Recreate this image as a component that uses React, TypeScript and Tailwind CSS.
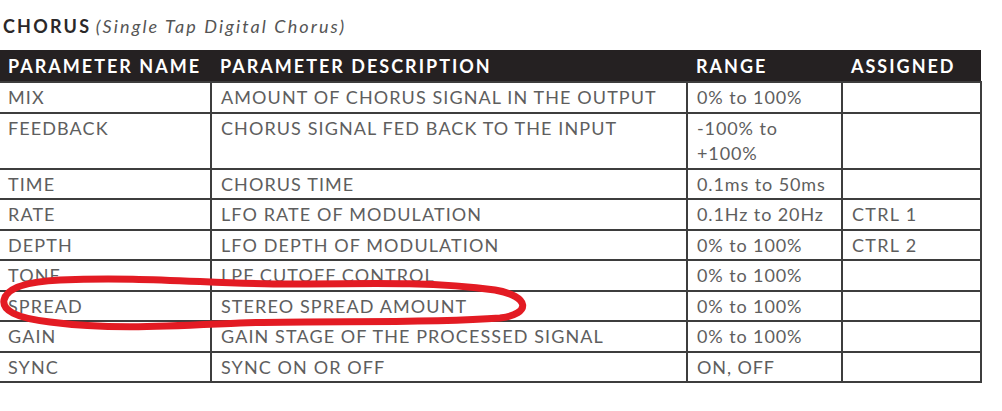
import React from 'react';

type Row = {
  name: string;
  desc: string;
  range: string[];
  assigned?: string;
  tall?: boolean;
};

const rows: Row[] = [
  { name: 'MIX', desc: 'AMOUNT OF CHORUS SIGNAL IN THE OUTPUT', range: ['0% to 100%'] },
  { name: 'FEEDBACK', desc: 'CHORUS SIGNAL FED BACK TO THE INPUT', range: ['-100% to', '+100%'], tall: true },
  { name: 'TIME', desc: 'CHORUS TIME', range: ['0.1ms to 50ms'] },
  { name: 'RATE', desc: 'LFO RATE OF MODULATION', range: ['0.1Hz to 20Hz'], assigned: 'CTRL 1' },
  { name: 'DEPTH', desc: 'LFO DEPTH OF MODULATION', range: ['0% to 100%'], assigned: 'CTRL 2' },
  { name: 'TONE', desc: 'LPF CUTOFF CONTROL', range: ['0% to 100%'] },
  { name: 'SPREAD', desc: 'STEREO SPREAD AMOUNT', range: ['0% to 100%'] },
  { name: 'GAIN', desc: 'GAIN STAGE OF THE PROCESSED SIGNAL', range: ['0% to 100%'] },
  { name: 'SYNC', desc: 'SYNC ON OR OFF', range: ['ON, OFF'] },
];

const font = { fontFamily: 'Lato, "Noto Sans", sans-serif' };

const App: React.FC = () => {
  return (
    <div className="relative w-[1002px] h-[411px] bg-white overflow-hidden" style={font}>
      {/* Title */}
      <div className="pl-[3px] pt-[15px] h-[50px] text-[18px] leading-[22px]">
        <span className="font-bold text-[#2b2829] tracking-[2.2px]">CHORUS</span>{' '}
        <span className="italic text-[#555] tracking-[2.1px]">(Single Tap Digital Chorus)</span>
      </div>

      {/* Table */}
      <table className="w-[981px] table-fixed border-collapse text-[18px] text-[#5e5e5e]">
        <colgroup>
          <col className="w-[211px]" />
          <col className="w-[476px]" />
          <col className="w-[155px]" />
          <col className="w-[139px]" />
        </colgroup>
        <thead>
          <tr className="h-[32px] bg-[#252122] text-white font-bold text-[18px] tracking-[2px]">
            <th className="text-left pl-[8px] pt-[2px] align-middle whitespace-nowrap">PARAMETER NAME</th>
            <th className="text-left pl-[9px] pt-[2px] align-middle whitespace-nowrap">PARAMETER DESCRIPTION</th>
            <th className="text-left pl-[9px] pt-[2px] align-middle">RANGE</th>
            <th className="text-left pl-[9px] pt-[2px] align-middle">ASSIGNED</th>
          </tr>
        </thead>
        <tbody>
          {rows.map((r) => (
            <tr key={r.name} className={r.tall ? 'h-[56px]' : 'h-[30.5px]'}>
              <td className="border-2 border-l-0 border-[#3d3d3d] pl-[8px] align-top pt-[2px] leading-[25px] tracking-[1.1px]">
                {r.name}
              </td>
              <td className="border-2 border-[#3d3d3d] pl-[9px] align-top pt-[2px] leading-[25px] tracking-[1.1px] whitespace-nowrap">
                {r.desc}
              </td>
              <td className="border-2 border-[#3d3d3d] pl-[9px] align-top pt-[2px] leading-[25px] tracking-[0.9px] whitespace-nowrap">
                {r.range.map((l) => (
                  <div key={l}>{l}</div>
                ))}
              </td>
              <td className="border-2 border-[#3d3d3d] pl-[9px] align-top pt-[2px] leading-[25px] tracking-[1.3px]">
                {r.assigned ?? ''}
              </td>
            </tr>
          ))}
        </tbody>
      </table>

      {/* Red hand-drawn marker */}
      <svg className="absolute left-0 top-0 pointer-events-none" width="1002" height="411" viewBox="0 0 1002 411">
        <path
          d="M 60 280 C 150 276, 220 285, 300 284 C 380 283, 440 282, 495 290 C 530 296, 532 314, 500 318 C 420 324, 320 320, 240 323 C 170 326, 110 330, 50 322 C 15 318, 2 310, 4 300 C 6 290, 20 282, 60 280 Z"
          fill="none"
          stroke="#e31b23"
          strokeWidth="7"
          strokeLinecap="round"
          strokeLinejoin="round"
        />
      </svg>
    </div>
  );
};

export default App;
